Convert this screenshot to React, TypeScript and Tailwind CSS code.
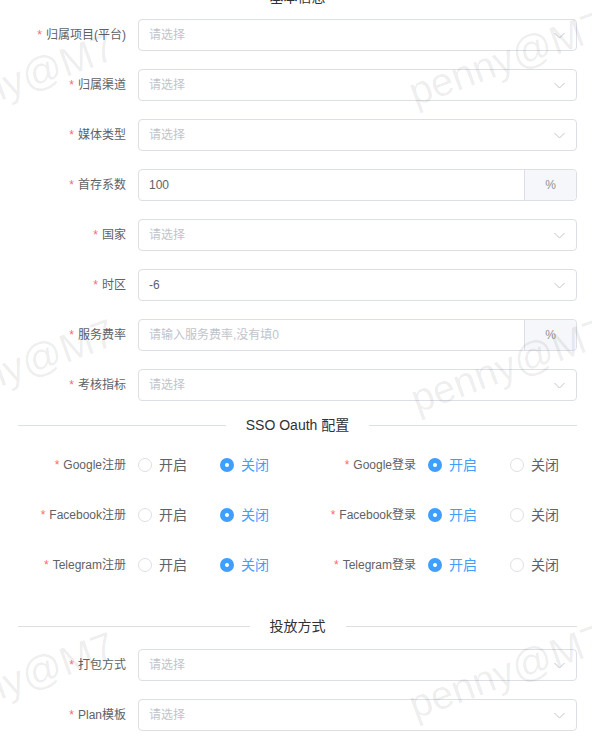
import React from 'react';

// Types
interface FieldProps {
  label: string;
  value?: string;
  placeholder?: string;
  select?: boolean;
  append?: string;
}

interface RadioRowProps {
  label: string;
  value: 'on' | 'off';
}

const Divider: React.FC<{ title: string; className?: string }> = ({ title, className = '' }) => (
  <div className={`ml-[18px] flex h-5 items-center ${className}`}>
    <div className="h-px flex-1 bg-[#dcdfe6]" />
    <span className="px-5 text-[14px] leading-5 text-[#303133]">{title}</span>
    <div className="h-px flex-1 bg-[#dcdfe6]" />
  </div>
);

const Label: React.FC<{ text: string }> = ({ text }) => (
  <div className="w-[138px] shrink-0 pr-3 text-right text-[12px] leading-8 text-[#606266]">
    <span className="mr-1 text-[#f56c6c]">*</span>
    {text}
  </div>
);

const Chevron = () => (
  <svg className="mr-[11px] h-[7px] w-[11px]" viewBox="0 0 11 7" fill="none">
    <path d="M0.5 1 L5.5 6 L10.5 1" stroke="#c0c4cc" strokeWidth="1" />
  </svg>
);

// Form item with select / input
const Field: React.FC<FieldProps> = ({ label, value, placeholder = '请选择', select = true, append }) => (
  <div className="mb-[18px] flex h-8 items-center">
    <Label text={label} />
    <div className="flex h-8 flex-1 items-center rounded-[4px] border border-[#dcdfe6] bg-white">
      <span className={`flex-1 pl-[10px] text-[12px] ${value ? 'text-[#606266]' : 'text-[#c0c4cc]'}`}>
        {value || placeholder}
      </span>
      {select && !append && <Chevron />}
      {append && (
        <div className="flex h-full items-center rounded-r-[4px] border-l border-[#dcdfe6] bg-[#f5f7fa] px-5 text-[12px] text-[#909399]">
          {append}
        </div>
      )}
    </div>
  </div>
);

const Radio: React.FC<{ text: string; checked: boolean }> = ({ text, checked }) => (
  <div className="flex w-[82px] shrink-0 items-center">
    {checked ? (
      <span className="flex h-[14px] w-[14px] items-center justify-center rounded-full bg-[#409eff]">
        <span className="h-1 w-1 rounded-full bg-white" />
      </span>
    ) : (
      <span className="h-[14px] w-[14px] rounded-full border border-[#dcdfe6] bg-white" />
    )}
    <span className={`ml-[7px] text-[14px] ${checked ? 'text-[#409eff]' : 'text-[#606266]'}`}>{text}</span>
  </div>
);

const RadioItem: React.FC<RadioRowProps> = ({ label, value }) => (
  <div className="flex h-8 items-center">
    <Label text={label} />
    <Radio text="开启" checked={value === 'on'} />
    <Radio text="关闭" checked={value === 'off'} />
  </div>
);

const RadioRow: React.FC<{ left: RadioRowProps; right: RadioRowProps }> = ({ left, right }) => (
  <div className="mb-[18px] flex">
    <div className="w-[290px] shrink-0">
      <RadioItem {...left} />
    </div>
    <div className="flex-1">
      <RadioItem {...right} />
    </div>
  </div>
);

const Watermark: React.FC<{ className: string }> = ({ className }) => (
  <span
    className={`pointer-events-none absolute h-10 origin-bottom-left rotate-[-20deg] whitespace-nowrap text-[40px] leading-10 text-black/[0.07] ${className}`}
  >
    penny@M7
  </span>
);

export default function App() {
  return (
    <div className="relative min-h-[750px] overflow-hidden bg-white font-['Liberation_Sans','Noto_Sans_CJK_SC',sans-serif]">
      <div className="pr-[15px]">
        <Divider title="基本信息" className="-mt-[13px] mb-3" />

        <Field label="归属项目(平台)" />
        <Field label="归属渠道" />
        <Field label="媒体类型" />
        <Field label="首存系数" value="100" append="%" />
        <Field label="国家" />
        <Field label="时区" value="-6" />
        <Field label="服务费率" placeholder="请输入服务费率,没有填0" append="%" />
        <Field label="考核指标" />

        <Divider title="SSO Oauth 配置" className="-mt-1 mb-[14px]" />

        <RadioRow left={{ label: 'Google注册', value: 'off' }} right={{ label: 'Google登录', value: 'on' }} />
        <RadioRow left={{ label: 'Facebook注册', value: 'off' }} right={{ label: 'Facebook登录', value: 'on' }} />
        <RadioRow left={{ label: 'Telegram注册', value: 'off' }} right={{ label: 'Telegram登录', value: 'on' }} />

        <Divider title="投放方式" className="mt-[35px] mb-[13px]" />

        <Field label="打包方式" />
        <Field label="Plan模板" />
      </div>

      {/* watermark layer */}
      <Watermark className="left-[417px] top-[72px]" />
      <Watermark className="left-[419px] top-[379px]" />
      <Watermark className="left-[417px] top-[685px]" />
      <Watermark className="left-[-73px] top-[94px]" />
      <Watermark className="left-[-73px] top-[380px]" />
      <Watermark className="left-[-73px] top-[693px]" />
    </div>
  );
}
